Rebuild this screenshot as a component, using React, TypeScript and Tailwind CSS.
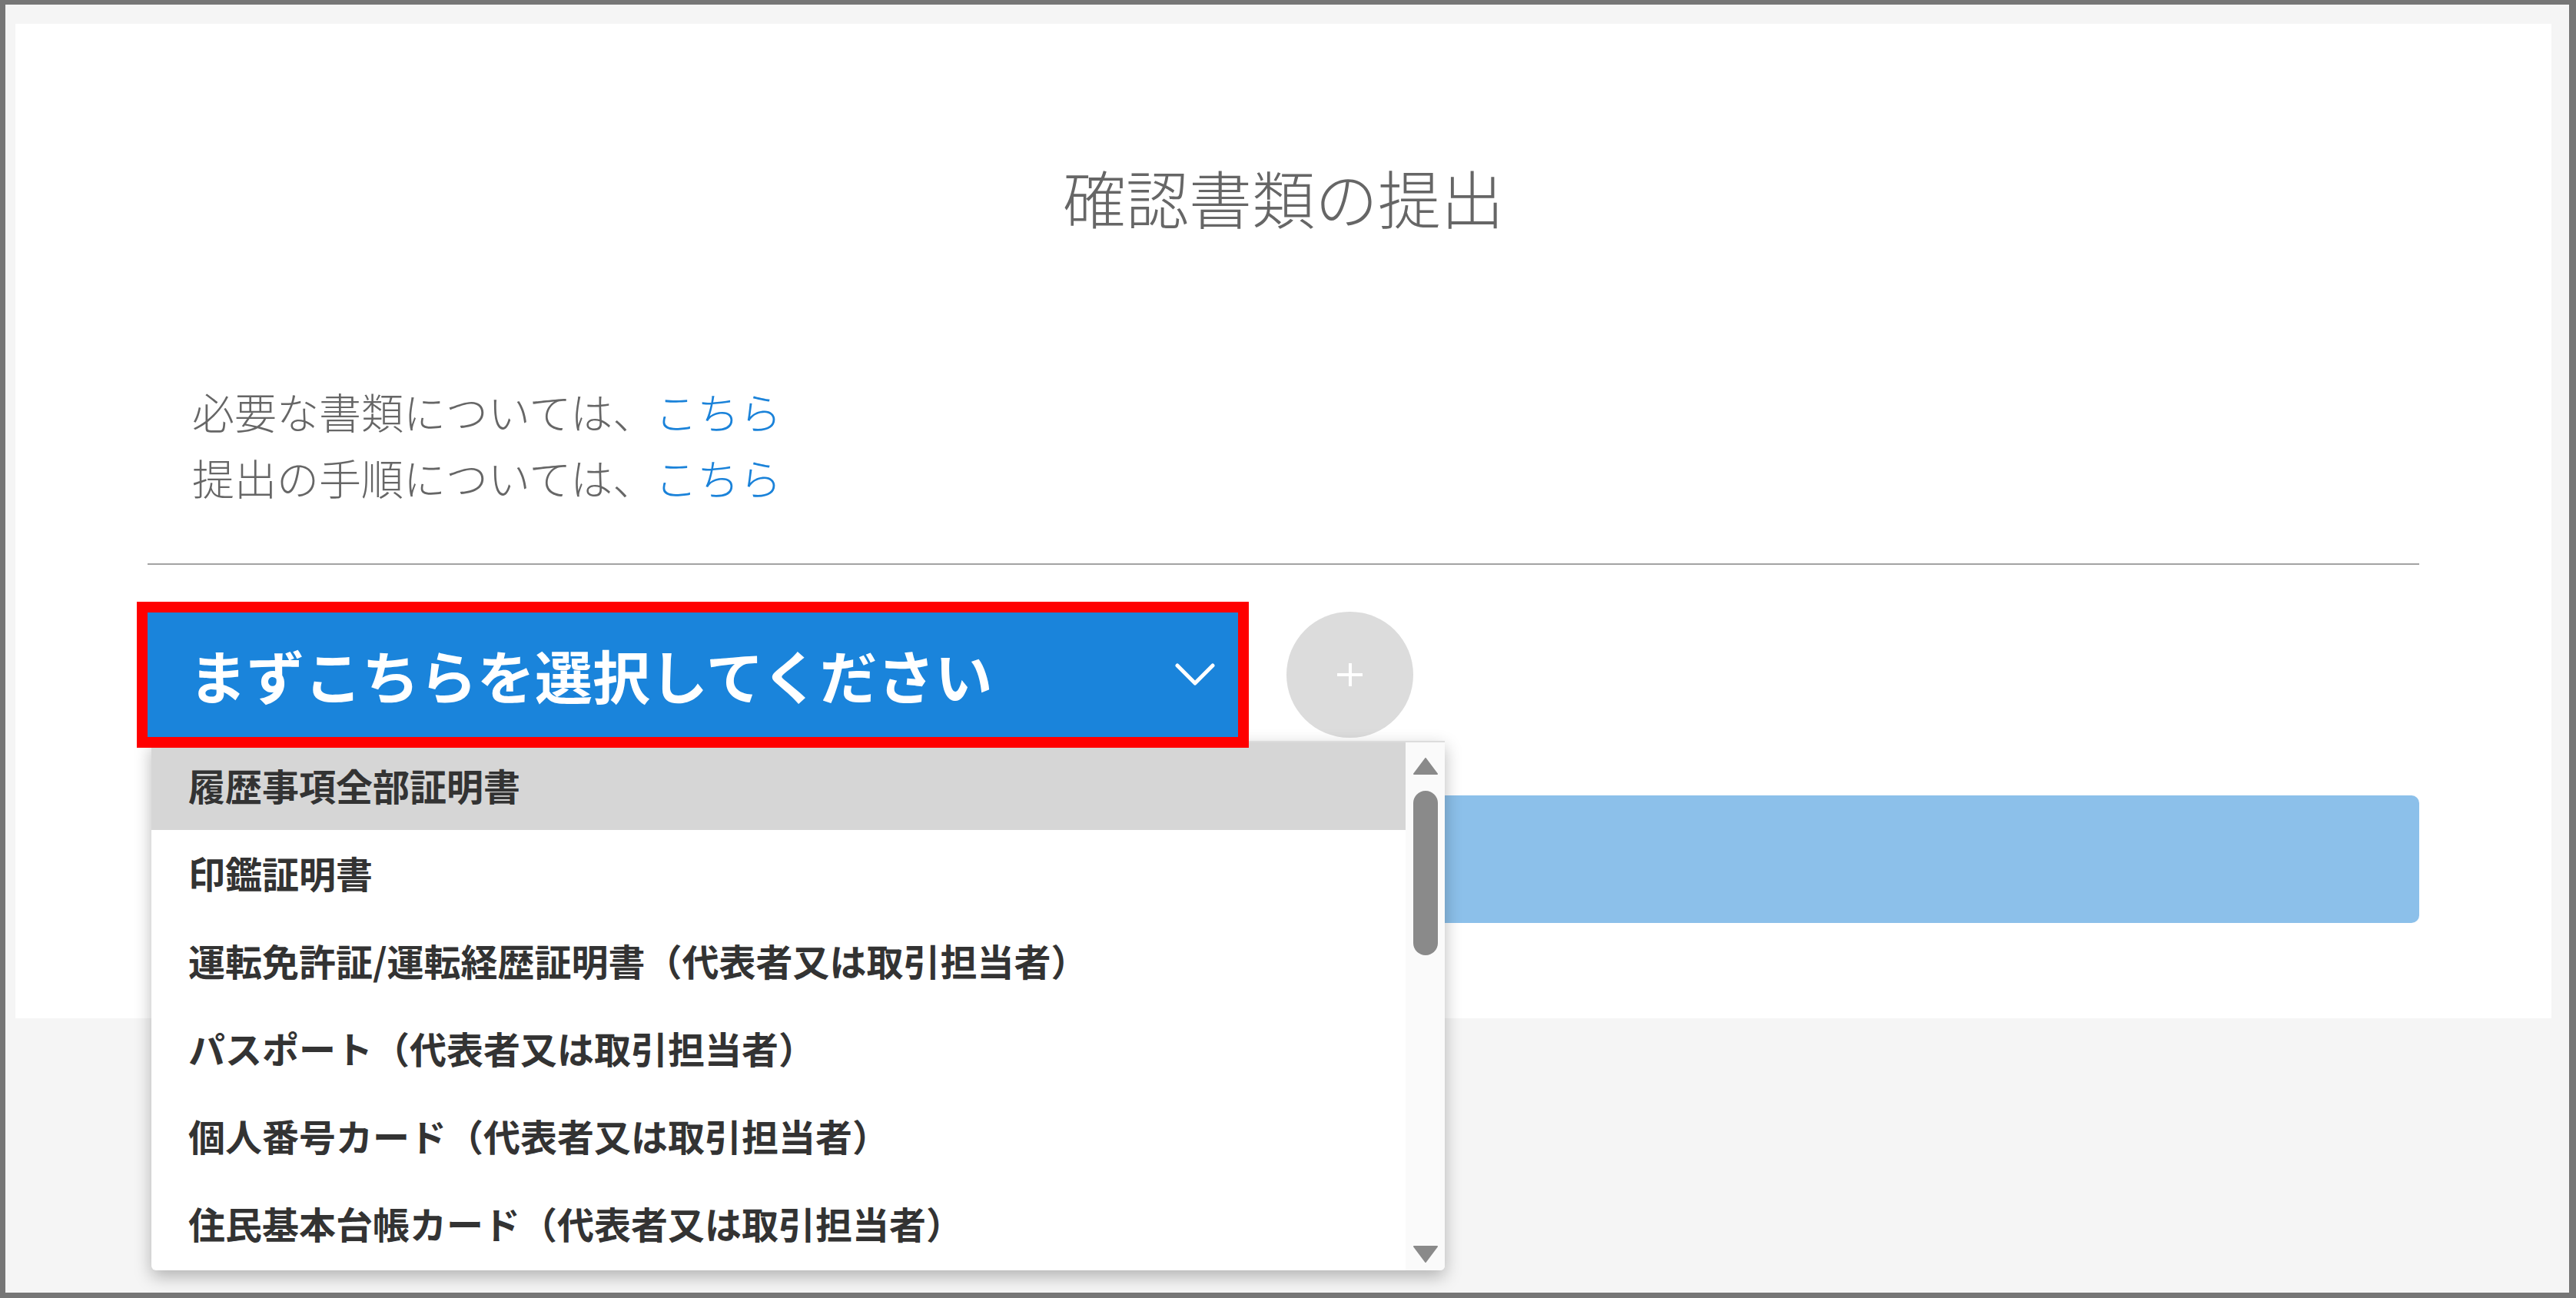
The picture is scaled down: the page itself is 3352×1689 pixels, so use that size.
const documents = [
  "履歴事項全部証明書",
  "印鑑証明書",
  "運転免許証/運転経歴証明書（代表者又は取引担当者）",
  "パスポート（代表者又は取引担当者）",
  "個人番号カード（代表者又は取引担当者）",
  "住民基本台帳カード（代表者又は取引担当者）",
];

function ChevronDown() {
  return (
    <svg width="52" height="30" viewBox="0 0 52 30" fill="none">
      <polyline
        points="3,3 26,26 49,3"
        stroke="white"
        strokeWidth="5"
        strokeLinecap="round"
        strokeLinejoin="round"
      />
    </svg>
  );
}

function ScrollArrow({ up }: { up?: boolean }) {
  return (
    <svg width="32" height="22" viewBox="0 0 32 22">
      <polygon
        points={up ? "16,1 31,21 1,21" : "1,1 31,1 16,21"}
        fill="#8a8a8a"
        stroke="#8a8a8a"
        strokeWidth="2"
        strokeLinejoin="round"
      />
    </svg>
  );
}

function DocumentDropdown() {
  return (
    <div className="absolute top-[168px] left-[5px] z-10 flex h-[689px] w-[1683px] overflow-hidden rounded-b-[6px] border-t-2 border-[#dcdcdc] bg-white shadow-[0_8px_22px_rgba(0,0,0,0.28)]">
      <ul className="flex-1">
        {documents.map((doc, i) => (
          <li
            key={doc}
            className={
              i === 0
                ? "flex h-[114px] items-center bg-[#d6d6d6] pb-[4px] pl-[48px] text-[48px] font-bold text-[#333]"
                : "flex h-[114px] items-center pb-[4px] pl-[48px] text-[48px] font-bold text-[#333]"
            }>
            {doc}
          </li>
        ))}
      </ul>
      <div className="flex w-[51px] flex-col items-center bg-[#fafafa] pt-[20px] pb-[10px]">
        <ScrollArrow up />
        <div className="mt-[21px] h-[214px] w-[32px] rounded-full bg-[#8a8a8a]" />
        <div className="flex-1" />
        <ScrollArrow />
      </div>
    </div>
  );
}

export default function App() {
  return (
    <div className="box-border h-[1689px] w-[3352px] border-t-[6px] border-r-[9px] border-b-[7px] border-l-[7px] border-[#767676] bg-[#f5f5f5] pt-[25px] pl-[13px] font-['Noto_Sans_CJK_JP',sans-serif]">
      <div className="h-[1294px] w-[3300px] bg-white px-[172px] pt-[176px]">
        <h1 className="text-center text-[82px] leading-[98px] font-light text-[#666]">
          確認書類の提出
        </h1>

        <div className="mt-[186px] pl-[58px] text-[55px] leading-[86px] font-light text-[#666]">
          <p>
            必要な書類については、<a className="text-[#1a82d9]">こちら</a>
          </p>
          <p>
            提出の手順については、<a className="text-[#1a82d9]">こちら</a>
          </p>
        </div>

        <hr className="mt-[70px] border-t-2 border-[#a3a3a3]" />

        <div className="relative mt-[61px] flex items-center gap-[63px]">
          <button
            type="button"
            className="relative z-20 flex h-[162px] w-[1419px] items-center justify-between bg-[#1a84db] pr-[30px] pl-[54px] text-[75px] font-bold text-white outline-[14px] outline-[#ff0000]">
            <span>まずこちらを選択してください</span>
            <ChevronDown />
          </button>
          <button
            type="button"
            className="relative flex h-[164px] w-[165px] items-center justify-center rounded-full bg-[#dcdcdc]">
            <span className="absolute h-[4px] w-[33px] bg-white" />
            <span className="absolute h-[30px] w-[4px] bg-white" />
          </button>
          <DocumentDropdown />
        </div>

        <div className="mt-[75px] ml-[12px] h-[166px] rounded-[10px] bg-[#8cc0ea]" />
      </div>
    </div>
  );
}
